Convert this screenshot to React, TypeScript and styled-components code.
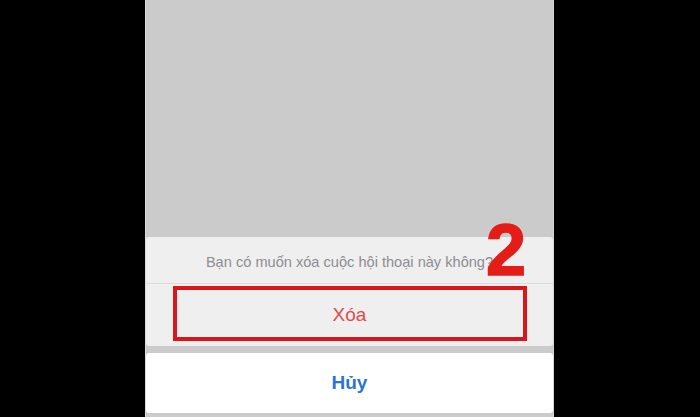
import React from 'react'
import styled, { createGlobalStyle } from 'styled-components'

const GlobalStyle = createGlobalStyle`
  html, body {
    margin: 0;
    padding: 0;
    background: #000;
  }
  body {
    font-family: 'Liberation Sans', Arial, sans-serif;
  }
`

const Stage = styled.div`
  width: 700px;
  height: 417px;
  background: #000;
  display: flex;
  justify-content: center;
  overflow: hidden;
`

const Screen = styled.div`
  width: 409px;
  height: 417px;
  margin-left: -1px;
  background: #cbcbcb;
  border-left: 1px solid #dadada;
  border-right: 1px solid #d4d4d4;
  box-sizing: border-box;
  display: flex;
  flex-direction: column;
  padding-bottom: 4px;
  position: relative;
`

const Backdrop = styled.div`
  flex: 1;
`

const Sheet = styled.div`
  background: #efefef;
  border-radius: 3px;
  display: flex;
  flex-direction: column;
`

const Title = styled.div`
  height: 47px;
  display: flex;
  align-items: center;
  justify-content: center;
  padding-top: 3px;
  box-sizing: border-box;
  font-size: 14.6px;
  color: #8d8d92;
  border-bottom: 1px solid #dcdcdc;
`

const Action = styled.div<{ $tone: 'danger' | 'cancel' }>`
  position: relative;
  height: ${(p) => (p.$tone === 'cancel' ? '60px' : '62px')};
  display: flex;
  align-items: center;
  justify-content: center;
  font-size: 19px;
  font-weight: ${(p) => (p.$tone === 'cancel' ? 600 : 400)};
  color: ${(p) => (p.$tone === 'cancel' ? '#2c74d2' : '#e04b4b')};
`

const CancelCard = styled.div`
  margin-top: 7px;
  background: #fff;
  border-radius: 3px;
`

const Highlight = styled.div`
  position: absolute;
  left: 27px;
  right: 26px;
  top: 2px;
  bottom: 5px;
  border: 4px solid #d8161b;
  pointer-events: none;
`

const StepNumber = styled.div`
  position: absolute;
  left: 340px;
  top: 214px;
  font-family: 'Liberation Sans', Arial, sans-serif;
  font-weight: 900;
  font-size: 72px;
  line-height: 72px;
  color: #e41d18;
  -webkit-text-stroke: 1.5px #e41d18;
`

export default function App() {
  return (
    <>
      <GlobalStyle />
      <Stage>
        <Screen>
          <Backdrop />
          <Sheet>
            <Title>Bạn có muốn xóa cuộc hội thoại này không?</Title>
            <Action $tone="danger">
              Xóa
              <Highlight />
            </Action>
          </Sheet>
          <CancelCard>
            <Action $tone="cancel">Hủy</Action>
          </CancelCard>
          <StepNumber>2</StepNumber>
        </Screen>
      </Stage>
    </>
  )
}
